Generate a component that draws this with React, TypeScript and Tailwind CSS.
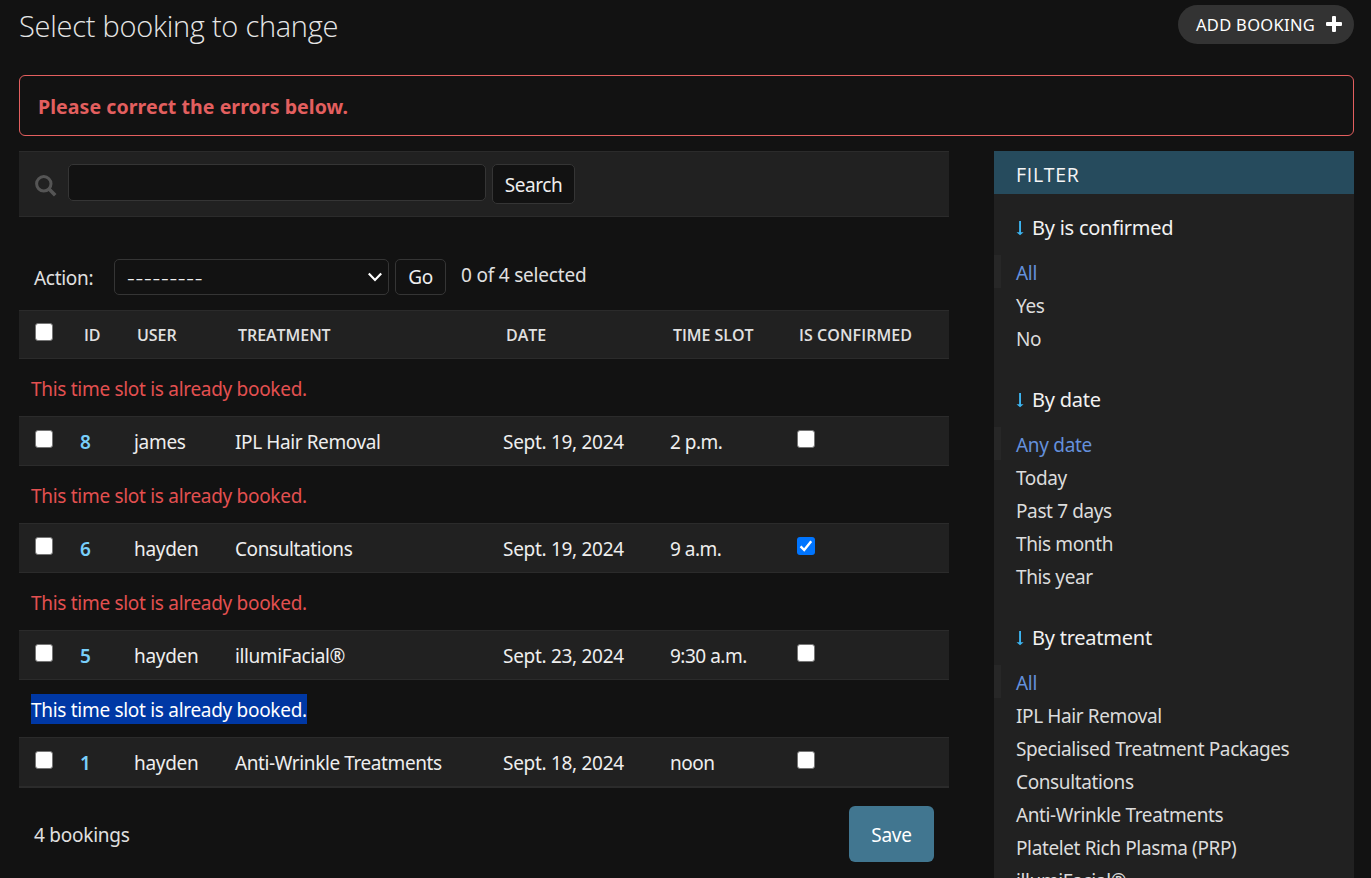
import type { ReactNode } from "react";

const COLS = "grid grid-cols-[61px_54px_101px_268px_167px_127px_1fr]";
const BODY = "font-['Noto_Sans','Open_Sans',sans-serif] text-[19px]";

type Booking = {
  id: number;
  user: string;
  treatment: string;
  date: string;
  time: string;
  confirmed?: boolean;
  highlighted?: boolean;
};

const bookings: Booking[] = [
  { id: 8, user: "james", treatment: "IPL Hair Removal", date: "Sept. 19, 2024", time: "2 p.m." },
  { id: 6, user: "hayden", treatment: "Consultations", date: "Sept. 19, 2024", time: "9 a.m.", confirmed: true },
  { id: 5, user: "hayden", treatment: "illumiFacial®", date: "Sept. 23, 2024", time: "9:30 a.m." },
  { id: 1, user: "hayden", treatment: "Anti-Wrinkle Treatments", date: "Sept. 18, 2024", time: "noon", highlighted: true },
];

const filters = [
  { title: "By is confirmed", options: ["All", "Yes", "No"] },
  { title: "By date", options: ["Any date", "Today", "Past 7 days", "This month", "This year"] },
  {
    title: "By treatment",
    options: [
      "All",
      "IPL Hair Removal",
      "Specialised Treatment Packages",
      "Consultations",
      "Anti-Wrinkle Treatments",
      "Platelet Rich Plasma (PRP)",
      "illumiFacial®",
    ],
  },
];

function Checkbox({ checked = false }: { checked?: boolean }) {
  if (checked) {
    return (
      <span className="block size-[18px] rounded-[3px] bg-[#0075ff]">
        <svg viewBox="0 0 18 18" className="size-[18px]" fill="none" stroke="#fff" strokeWidth="2.4">
          <path d="M3.6 9.3 7.2 13 14.2 4.2" />
        </svg>
      </span>
    );
  }
  return <span className="block size-[18px] rounded-[3px] border border-[#767676] bg-white" />;
}

function DownArrow() {
  return (
    <svg viewBox="0 0 8 16" className="mr-[8px] h-4 w-2 shrink-0" fill="#3cb4f0">
      <path d="M3.1 1h1.9v11.2H7.6L4.05 15.2.5 12.2h2.6z" />
    </svg>
  );
}

function HeaderCell({ children }: { children: ReactNode }) {
  return <div className="pl-[3px]">{children}</div>;
}

function BookingRow({ booking, last }: { booking: Booking; last: boolean }) {
  return (
    <>
      <div className="h-[57px] pt-[14px] pl-3">
        <span
          className={
            booking.highlighted
              ? "inline-block h-[30px] w-[276px] bg-[#0038a5] leading-[32px] whitespace-nowrap text-white"
              : "inline-block h-[30px] leading-[32px] whitespace-nowrap text-[#e35050]"
          }
        >
          This time slot is already booked.
        </span>
      </div>
      <div
        className={`${COLS} ${
          last ? "h-[51px] border-b-2" : "h-[50px] border-b"
        } border-t border-[#2b2b2b] bg-[#212121] leading-[51px] whitespace-nowrap text-[#eeeeee]`}
      >
        <div className="pt-[13px] pl-4">
          <Checkbox />
        </div>
        <div className="font-semibold text-[#79cffa]">{booking.id}</div>
        <div>{booking.user}</div>
        <div className="tracking-[-0.4px]">{booking.treatment}</div>
        <div>{booking.date}</div>
        <div className="tracking-[-0.5px]">{booking.time}</div>
        <div className="pt-[13px]">
          <Checkbox checked={booking.confirmed} />
        </div>
      </div>
    </>
  );
}

function Changelist() {
  return (
    <main className={`w-[930px] shrink-0 tracking-[-0.3px] ${BODY}`}>
      <div className="flex h-[66px] items-start border-y border-[#2b2b2b] bg-[#212121] pt-3 pl-4">
        <svg viewBox="0 0 22 22" className="mt-[11px] mr-[11px] size-[22px]" fill="none" stroke="#555" strokeWidth="3">
          <circle cx="8.8" cy="8.8" r="7.2" />
          <path d="M13.8 13.8 20.2 20.2" strokeWidth="3.6" />
        </svg>
        <div className="mr-[6px] h-[37px] w-[418px] rounded-[5px] border border-[#353535] bg-[#121212]" />
        <button className="h-10 w-[83px] rounded-[5px] border border-[#353535] bg-[#121212] pt-[2px] tracking-[-0.4px] text-[#eeeeee]">
          Search
        </button>
      </div>

      <div className="mt-[42px] flex h-[51px] items-start text-[#e0e0e0]">
        <span className="w-[95px] pl-[15px] leading-[39px]">Action:</span>
        <div className="mr-[6px] flex h-9 w-[275px] items-center justify-between rounded-[5px] border border-[#353535] bg-[#121212] pr-[5px] pl-3 text-[#eeeeee]">
          <span className="text-[24px] leading-[34px] font-light tracking-[0.75px]">---------</span>
          <svg viewBox="0 0 16 10" className="h-[10px] w-4" fill="none" stroke="#fff" strokeWidth="2.2">
            <path d="M1.8 1.6 8 8 14.2 1.6" />
          </svg>
        </div>
        <button className="mr-[15px] h-9 w-[51px] rounded-[5px] border border-[#353535] bg-[#121212] text-[#eeeeee]">
          Go
        </button>
        <span className="leading-[32px] tracking-[-0.2px]">0 of 4 selected</span>
      </div>

      <div
        className={`${COLS} h-[49px] border-y border-[#2b2b2b] bg-[#212121] font-['Open_Sans',sans-serif] text-base leading-[48px] font-semibold tracking-[-0.05px] whitespace-nowrap text-[#e0e0e0]`}
      >
        <div className="pt-3 pl-4">
          <Checkbox />
        </div>
        <div className="pl-1">ID</div>
        <HeaderCell>USER</HeaderCell>
        <HeaderCell>TREATMENT</HeaderCell>
        <HeaderCell>DATE</HeaderCell>
        <HeaderCell>TIME SLOT</HeaderCell>
        <div className="pl-0.5 tracking-[0.08px]">IS CONFIRMED</div>
      </div>

      {bookings.map((b, i) => (
        <BookingRow key={b.id} booking={b} last={i === bookings.length - 1} />
      ))}

      <div className="mt-[18px] flex h-14 items-center justify-between pr-[15px] pl-[15px]">
        <span className="pt-[2px] tracking-[-0.25px] text-[#e0e0e0]">4 bookings</span>
        <button className="h-14 w-[85px] rounded-[6px] bg-[#417690] pt-[2px] text-white">Save</button>
      </div>
    </main>
  );
}

function FilterPanel() {
  return (
    <aside className="h-[760px] w-[360px] shrink-0 bg-[#212121]">
      <h2 className="h-[43px] bg-[#264b5d] pl-[22px] text-[19.5px] leading-[47px] tracking-[0.7px] text-[#f5f5f5]">
        FILTER
      </h2>
      {filters.map((group, g) => (
        <section key={group.title} className={g === 0 ? "pt-[18px]" : "pt-[30px]"}>
          <h3 className="flex h-8 items-center pl-[22px] font-['Noto_Sans','Open_Sans',sans-serif] text-[20px] tracking-[-0.24px] text-[#f2f2f2]">
            <DownArrow />
            {group.title}
          </h3>
          <ul className={`mt-[11px] tracking-[-0.38px] whitespace-nowrap ${BODY}`}>
            {group.options.map((option, i) => (
              <li
                key={option}
                className={
                  i === 0
                    ? "h-[33px] border-l-[7px] border-[#272727] pl-[15px] leading-[37px] tracking-[-0.3px] text-[#6490dc]"
                    : "h-[33px] pl-[22px] leading-[37px] text-[#dcdcdc]"
                }
              >
                {option}
              </li>
            ))}
          </ul>
        </section>
      ))}
    </aside>
  );
}

export default function App() {
  return (
    <div className="h-[878px] w-[1371px] overflow-hidden bg-[#121212] pr-[17px] pl-[19px] font-['Open_Sans','Noto_Sans',sans-serif]">
      <header className="flex h-[75px] items-start justify-between">
        <h1 className="pt-[6px] text-[29px] leading-[40px] font-light tracking-[-0.26px] text-[#e6e6e6]">
          Select booking to change
        </h1>
        <a className="mt-[5px] flex h-[39px] w-[176px] items-center rounded-full bg-[#333333] pt-[2px] pl-[18px] font-['Noto_Sans','Open_Sans',sans-serif] text-[16.5px] tracking-[0.3px] text-white">
          ADD BOOKING
          <svg viewBox="0 0 16 16" className="-mt-[4px] ml-[11px] size-4 shrink-0" fill="#fff">
            <path d="M7 0h2a1 1 0 0 1 1 1v5h5a1 1 0 0 1 1 1v2a1 1 0 0 1-1 1h-5v5a1 1 0 0 1-1 1H7a1 1 0 0 1-1-1v-5H1a1 1 0 0 1-1-1V7a1 1 0 0 1 1-1h5V1a1 1 0 0 1 1-1z" />
          </svg>
        </a>
      </header>
      <p className="h-[61px] rounded-[6px] border border-[#e35f5f] pl-[18px] font-['Noto_Sans','Open_Sans',sans-serif] text-[19.5px] leading-[62px] font-bold tracking-[0.08px] text-[#e35f5f]">
        Please correct the errors below.
      </p>
      <div className="flex items-start justify-between pt-[15px]">
        <Changelist />
        <FilterPanel />
      </div>
    </div>
  );
}
